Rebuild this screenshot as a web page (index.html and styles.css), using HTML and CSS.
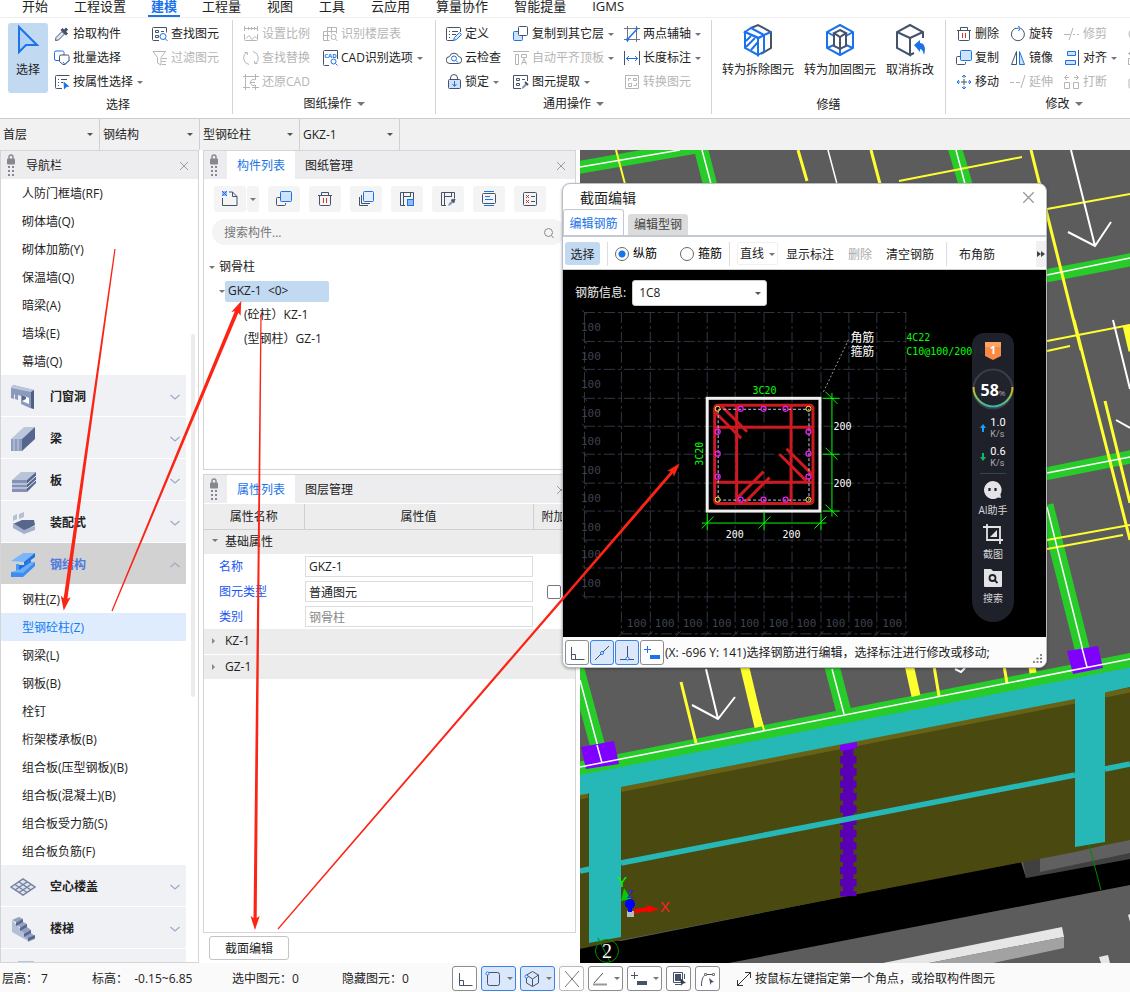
FILE: index.html
```html
<!DOCTYPE html>
<html lang="zh-CN">
<head>
<meta charset="utf-8">
<title>截面编辑</title>
<link rel="stylesheet" href="styles.css">
</head>
<body>
<svg class="defs" width="0" height="0" aria-hidden="true">
  <symbol id="i-pick" viewBox="0 0 16 16"><path d="M1.500 14.500l.5-3 6-6 2.500 2.500-6 6z" fill="#dbe7f8" stroke="#4b5a75"/><path d="M7.500 3l5.500 5.500M10 6l3-3.500" fill="none" stroke="#45526b" stroke-width="3"/></symbol>
  <symbol id="i-batch" viewBox="0 0 16 16"><path class="b" d="M5 10.500H2a1.500 1.500 0 0 1-1.500-1.500V2.500A1.500 1.500 0 0 1 2 1h6.500A1.500 1.500 0 0 1 10 2.500V5"/><path class="d" d="M9 14.500l-3.500-3V6.500a1.500 1.500 0 0 1 1.500-1.500h6.500A1.500 1.500 0 0 1 15 6.500v4l-4 4z"/><path class="b" d="M9 12l2 2.500 4.500-4.500"/></symbol>
  <symbol id="i-prop" viewBox="0 0 16 16"><path class="d" d="M8 14.500H2.500a1 1 0 0 1-1-1V2.500a1 1 0 0 1 1-1h13M4 5.500h1M7 5.500h6M4 8.500h1M7 8.500h2M4 11.500h1"/><path d="M9.500 7.500l6 5-3 .5-2.500 2.500z" fill="#1a73e8"/></symbol>
  <symbol id="i-find" viewBox="0 0 16 16"><path class="d" d="M7 14.500H1.500a1 1 0 0 1-1-1V2.500a1 1 0 0 1 1-1h13v5M3.500 4.500h3v2h-3zM3.500 9.500h3v2h-3zM9 5.500h3"/><circle class="b" cx="11" cy="10.500" r="3"/><path class="b" d="M13 12.500l2.500 2.500"/></symbol>
  <symbol id="i-filter" viewBox="0 0 16 16"><path class="g" d="M1 1.500h12.500L9 7.500V9M1 1.500L5.500 7.500V13L9 15V9M10 8.500h5M10 11.500h4M10 14.500h4"/></symbol>
  <symbol id="i-scale" viewBox="0 0 16 16"><path class="g" d="M1 2.500h14M1.500 0v5M14.500 0v5M5.500 1v3M8.500 1v3M11.500 1v3M1.500 8v5.500a1 1 0 0 0 1 1h11a1 1 0 0 0 1-1V8M3 12.500l3-3 3 4 3-3 2 2"/></symbol>
  <symbol id="i-replace" viewBox="0 0 16 16"><path class="g" d="M6 14.500a6.500 6.500 0 0 1-2-12H1.500M4.500 2.500V5M10 1.500a6.500 6.500 0 0 1 2 12h2.500M11.500 13.500V11"/></symbol>
  <symbol id="i-restore" viewBox="0 0 16 16"><path class="g" d="M0 2.500h16M2.500 0v16M12.500 0v6M0 13.500h7M9 13.500h7M12.500 11v5M12 6a3 3 0 1 0 0 5M7 8.500h5"/></symbol>
  <symbol id="i-floor" viewBox="0 0 16 16"><path class="g" d="M5.500 1v4.500h-4v9h6M5.500 1.500h9v6M9.500 1.500v6M5.500 5.500h9M1.500 9.500h6M5.500 5.500v9"/><circle class="g" cx="11.500" cy="11" r="2.500"/><path class="g" d="M13.500 13l2 2"/></symbol>
  <symbol id="i-cad" viewBox="0 0 16 16"><path class="d" d="M7 15.500H2.500a1 1 0 0 1-1-1V1.500a1 1 0 0 1 1-1h13V9"/><text x="8.500" y="8" text-anchor="middle" class="cad-txt">CAD</text><circle class="b" cx="11.500" cy="11.500" r="2.500"/><path class="b" d="M13.500 13.500l2 2"/></symbol>
  <symbol id="i-define" viewBox="0 0 16 16"><path class="d" d="M8 14.500H1.500a1 1 0 0 1-1-1V2.500a1 1 0 0 1 1-1h12a1 1 0 0 1 1 1V6M3 5.500h1M6 5.500h6M3 8.500h1M6 8.500h4M3 11.500h1"/><path d="M7.500 14.500l1-3 5-5 2 2-5 5z" fill="#dcebfd" stroke="#1a73e8"/></symbol>
  <symbol id="i-cloud" viewBox="0 0 16 16"><path class="d" d="M4 13.500a3.500 3.500 0 0 1-.5-7 4.700 4.700 0 0 1 9 0 3.500 3.500 0 0 1-.5 7z"/><circle class="b" cx="8" cy="8.500" r="2.500"/><path class="b" d="M10 10.500l2 2"/></symbol>
  <symbol id="i-lock" viewBox="0 0 16 16"><path class="d" d="M4.500 5.500V4a3.500 3.500 0 0 1 7 0v1.500"/><rect x="2.500" y="5.500" width="12" height="9" rx="1" fill="#cfe0f8" stroke="#45526b"/><path d="M8.500 7v5M6.500 10l2 2.500 2-2.500" stroke="#1a73e8" fill="none"/></symbol>
  <symbol id="i-copyfl" viewBox="0 0 16 16"><rect x=".5" y="5.500" width="9" height="9" rx="1" fill="#cfe2fb" stroke="#1a73e8"/><rect x="5.500" y=".5" width="9" height="9" rx="1" fill="#fff" stroke="#45526b"/></symbol>
  <symbol id="i-align" viewBox="0 0 16 16"><path class="g" d="M0 1.500h16M2.500 4.500h3v10h-3zM8.500 4.500h5v3h-5zM8.500 14.500l2.500-6 2.500 6M9.500 12.500h4"/></symbol>
  <symbol id="i-extract" viewBox="0 0 16 16"><path class="d" d="M8 14.500H.5v-13h14V7M3.500 4.500h3v2h-3zM3.500 9.500h3v2h-3zM9 5.500h3"/><path d="M8.500 15l1-2.500 3-3 1.500 1.500-3 3z" fill="#8495b5"/><path d="M12 8l3 3" stroke="#45526b" stroke-width="2"/></symbol>
  <symbol id="i-axis" viewBox="0 0 16 16"><path d="M0 2.500h16M0 13.500h16M3.500 0v16M12.500 0v16" fill="none" stroke="#6b7588"/><path d="M3 14L14 2" stroke="#1a73e8" stroke-width="1.500"/><circle cx="3.500" cy="13.500" r="1.500" fill="#1a73e8"/></symbol>
  <symbol id="i-length" viewBox="0 0 16 16"><path class="d" d="M.5 1v14M15.500 1v14"/><path class="b" d="M2 8.500h12M5 6L2.500 8.500 5 11M11 6l2.500 2.500L11 11"/></symbol>
  <symbol id="i-convert" viewBox="0 0 16 16"><path class="g" d="M1.500 1.500h13v13h-13zM4.500 9.500h3v3h-3zM9.500 4.500h3v2h-3zM7 4.500H4.500V7M9.500 11.500h3V9"/></symbol>
  <symbol id="i-trash" viewBox="0 0 16 16"><path class="d" d="M1 4.500h14M4.500 4V1.500h7V4M2.500 4.500v9a1 1 0 0 0 1 1h9a1 1 0 0 0 1-1v-9"/><path d="M6.500 7v5M9.500 7v5" stroke="#d9342b"/></symbol>
  <symbol id="i-copy" viewBox="0 0 16 16"><path class="d" d="M4 6.500H1.500a1 1 0 0 0-1 1v6a1 1 0 0 0 1 1h7a1 1 0 0 0 1-1V12"/><rect x="4.500" y=".5" width="11" height="10" rx="1" fill="#cfe2fb" stroke="#1a73e8"/></symbol>
  <symbol id="i-move" viewBox="0 0 16 16"><path class="d" d="M8 5v6M5 8h6"/><path class="b" d="M8 1v3M8 12v3M1 8h3M12 8h3M6 3l2-2 2 2M6 13l2 2 2-2M3 6L1 8l2 2M13 6l2 2-2 2"/></symbol>
  <symbol id="i-rotate" viewBox="0 0 16 16"><path class="d" d="M11 2.500a6.500 6.500 0 1 1-5-.5"/><path class="b" d="M5.500 2.500L10 2M8 0l2.500 2L8.500 5"/></symbol>
  <symbol id="i-mirror" viewBox="0 0 16 16"><path class="d" d="M6.500 1.500v13h-5z"/><path d="M9.500 1.500v13h5z" fill="#cfe2fb" stroke="#1a73e8"/></symbol>
  <symbol id="i-extend" viewBox="0 0 16 16"><path class="g" d="M0 8.500h4M6 8.500h4M11 14l4-13"/></symbol>
  <symbol id="i-trim" viewBox="0 0 16 16"><path class="g" d="M0 8.500h6M9 8.500h2M13 8.500h2M5 14l4-12"/></symbol>
  <symbol id="i-lineup" viewBox="0 0 16 16"><path d="M3.500 1.500h8v4h-8zM1.500 10.500h10v4h-10z" fill="#cfe2fb" stroke="#1a73e8"/><path class="d" d="M14.500 0v16"/></symbol>
  <symbol id="i-break" viewBox="0 0 16 16"><path class="g" d="M.5 8.500h5v6h-5zM9.500 8.500h5v6h-5zM1 3.500h4M3 1L.5 3.500 3 6M14 3.500h-4M12 1l2.500 2.500L12 6"/></symbol>
  <symbol id="i-new" viewBox="0 0 16 16"><path class="d" d="M10.500 1v4.500H15L10.500 1H7M15 5.500v9H.5V7"/><path d="M0 0h5v5H0z" fill="#8fbcf5"/><path class="b" d="M0 0l5 5M5 0L0 5"/></symbol>
  <symbol id="i-stack" viewBox="0 0 16 16"><rect x="5.500" y=".5" width="10" height="10" rx="1" fill="#e3effd" stroke="#1a73e8"/><path class="d" d="M3.500 4v8.500H12M1.500 6v8.500H10"/></symbol>
  <symbol id="i-save" viewBox="0 0 16 16"><path class="d" d="M6 14.500H1.500V1.500h13V8M4.500 1.500v13M11.500 1.500V6M4.500 5.500h7"/><rect x="8.500" y="8.500" width="6" height="6" fill="#8fbcf5" stroke="#1a73e8"/></symbol>
  <symbol id="i-savep" viewBox="0 0 16 16"><path class="d" d="M6 14.500H1.500V1.500h13V7M4.500 1.500v13M11.500 1.500V6M4.500 5.500h7"/><path d="M8 15l1-2.500 3-3 1.500 1.500-3 3z" fill="#8495b5"/><path d="M11.500 8.500l3 3M13 10l2-2" stroke="#45526b" stroke-width="1.800"/></symbol>
  <symbol id="i-text" viewBox="0 0 16 16"><rect class="d" x="1.500" y="2.500" width="13" height="10" rx="1"/><path class="b" d="M3 .5h10M3 14.500h10M4 5.500h5M4 8.500h8"/></symbol>
  <symbol id="i-check" viewBox="0 0 16 16"><rect class="d" x="1.500" y="1.500" width="13" height="13" rx="1"/><path d="M4 4l3 3M7 4L4 7M4 9l3 3M7 9l-3 3" stroke="#d9342b"/><path class="d" d="M9 5.500h4M9 10.500h4"/></symbol>
  <symbol id="i-x" viewBox="0 0 10 10"><path d="M1 1l8 8M9 1L1 9" stroke="#999"/></symbol>
  <symbol id="i-grip" viewBox="0 0 10 24"><path d="M3 6V4a2 2 0 0 1 4 0v2" fill="none" stroke="#85898f" stroke-width="1.400"/><rect x="1" y="5.500" width="8" height="6" rx="1" fill="#85898f"/><path d="M2 14h2M6 14h2M2 18h2M6 18h2M2 22h2M6 22h2" stroke="#85898f" stroke-width="2"/></symbol>
  <symbol id="i-down" viewBox="0 0 10 6"><path d="M.5 1L5 5 9.500 1" fill="none" stroke="#9aabc6" stroke-width="1.200"/></symbol>
  <symbol id="s-ortho" viewBox="0 0 16 16"><path class="d" d="M2.500 2v12.500h13M2.500 9.500h4v5"/></symbol>
</svg>

<nav class="tabs">
  <a href="#">开始</a><a href="#">工程设置</a><a href="#" class="on">建模</a><a href="#">工程量</a><a href="#">视图</a><a href="#">工具</a><a href="#">云应用</a><a href="#">算量协作</a><a href="#">智能提量</a><a href="#">IGMS</a>
</nav>

<header class="ribbon">
  <section class="group g1">
    <div class="cols">
      <button class="big on"><svg viewBox="0 0 28 34" class="bi"><path d="M5 4l18 18H12l-7 7z" fill="#b3d0f6" stroke="#1a73e8" stroke-width="2"/></svg><span>选择</span></button>
      <div class="col">
        <button><svg><use href="#i-pick"/></svg>拾取构件</button>
        <button><svg><use href="#i-batch"/></svg>批量选择</button>
        <button><svg><use href="#i-prop"/></svg>按属性选择<i class="dd"></i></button>
      </div>
      <div class="col">
        <button><svg><use href="#i-find"/></svg>查找图元</button>
        <button disabled><svg><use href="#i-filter"/></svg>过滤图元</button>
      </div>
    </div>
    <h2>选择</h2>
  </section>
  <section class="group g2">
    <div class="cols">
      <div class="col">
        <button disabled><svg><use href="#i-scale"/></svg>设置比例</button>
        <button disabled><svg><use href="#i-replace"/></svg>查找替换</button>
        <button disabled><svg><use href="#i-restore"/></svg>还原CAD</button>
      </div>
      <div class="col">
        <button disabled><svg><use href="#i-floor"/></svg>识别楼层表</button>
        <button><svg><use href="#i-cad"/></svg>CAD识别选项<i class="dd"></i></button>
      </div>
    </div>
    <h2>图纸操作<i class="dd lg"></i></h2>
  </section>
  <section class="group g3">
    <div class="cols">
      <div class="col">
        <button><svg><use href="#i-define"/></svg>定义</button>
        <button><svg><use href="#i-cloud"/></svg>云检查</button>
        <button><svg><use href="#i-lock"/></svg>锁定<i class="dd"></i></button>
      </div>
      <div class="col">
        <button><svg><use href="#i-copyfl"/></svg>复制到其它层<i class="dd"></i></button>
        <button disabled><svg><use href="#i-align"/></svg>自动平齐顶板<i class="dd"></i></button>
        <button><svg><use href="#i-extract"/></svg>图元提取<i class="dd"></i></button>
      </div>
      <div class="col">
        <button><svg><use href="#i-axis"/></svg>两点辅轴<i class="dd"></i></button>
        <button><svg><use href="#i-length"/></svg>长度标注<i class="dd"></i></button>
        <button disabled><svg><use href="#i-convert"/></svg>转换图元</button>
      </div>
    </div>
    <h2>通用操作<i class="dd lg"></i></h2>
  </section>
  <section class="group g4">
    <div class="cols">
      <button class="big"><svg viewBox="0 0 32 32" class="bi"><path d="M9 4l7-3 13 7v16l-10 6" fill="none" stroke="#45526b" stroke-width="2"/><path d="M3 8l6-4 13 7-5 3zM3 8v16l13 7V14zM16 14l6-3v17M16 14v17l5-3M29 8l-7 3" fill="none" stroke="#1a73e8" stroke-width="2"/><path d="M4 17l5-5M4 23l9-9M9 26l7-8" stroke="#1a73e8" stroke-width="2"/></svg><span>转为拆除图元</span></button>
      <button class="big"><svg viewBox="0 0 32 32" class="bi"><path d="M16 1l13 7v16l-13 7-13-7V8zM3 8l7 4M29 8l-7 4M3 24l7-3M29 24l-7-3M16 15v16" fill="none" stroke="#1a73e8" stroke-width="2"/><path d="M16 6l6 3-6 4-6-4zM10 9v13l6 3 6-3V9M16 13v12" fill="none" stroke="#45526b" stroke-width="2"/></svg><span>转为加固图元</span></button>
      <button class="big"><svg viewBox="0 0 32 32" class="bi"><path d="M29 14V8L16 1 3 8v16l13 7V14L3 8M16 14l13-6M16 31l4-2" fill="none" stroke="#45526b" stroke-width="2"/><path d="M20 21l6-5v3c5 0 6 6 4 12-1-4-2-6-4-6v3z" fill="#1a73e8"/></svg><span>取消拆改</span></button>
    </div>
    <h2>修缮</h2>
  </section>
  <section class="group g5">
    <div class="cols">
      <div class="col">
        <button><svg><use href="#i-trash"/></svg>删除</button>
        <button><svg><use href="#i-copy"/></svg>复制</button>
        <button><svg><use href="#i-move"/></svg>移动</button>
      </div>
      <div class="col">
        <button><svg><use href="#i-rotate"/></svg>旋转</button>
        <button><svg><use href="#i-mirror"/></svg>镜像</button>
        <button disabled><svg><use href="#i-extend"/></svg>延伸</button>
      </div>
      <div class="col">
        <button disabled><svg><use href="#i-trim"/></svg>修剪</button>
        <button><svg><use href="#i-lineup"/></svg>对齐<i class="dd"></i></button>
        <button disabled><svg><use href="#i-break"/></svg>打断</button>
      </div>
      <div class="col">
        <button disabled aria-label="偏移"><svg viewBox="0 0 16 16"><circle class="g" cx="7" cy="8" r="6"/></svg></button>
        <button disabled aria-label="合并"><svg><use href="#i-break"/></svg></button>
        <button disabled aria-label="分割"><svg viewBox="0 0 16 16"><rect class="g" x="1" y="5" width="10" height="9" rx="1"/></svg></button>
      </div>
    </div>
    <h2>修改<i class="dd lg"></i></h2>
  </section>
</header>

<div class="filters">
  <label><select aria-label="楼层"><option>首层</option></select></label>
  <label><select aria-label="构件大类"><option>钢结构</option></select></label>
  <label><select aria-label="构件类型"><option>型钢砼柱</option></select></label>
  <label><select aria-label="构件"><option>GKZ-1</option></select></label>
</div>

<main>
  <aside class="nav">
    <div class="bar"><svg class="grip"><use href="#i-grip"/></svg><h2>导航栏</h2><button class="x" aria-label="关闭"><svg><use href="#i-x"/></svg></button></div>
    <div class="navbody">
      <ul>
        <li><a href="#">人防门框墙(RF)</a></li><li><a href="#">砌体墙(Q)</a></li><li><a href="#">砌体加筋(Y)</a></li><li><a href="#">保温墙(Q)</a></li><li><a href="#">暗梁(A)</a></li><li><a href="#">墙垛(E)</a></li><li><a href="#">幕墙(Q)</a></li>
      </ul>
      <button class="cat"><svg viewBox="0 0 26 26"><path d="M1 4l2-3 21 5v19l-4-1-9-4v-8l-3-1v5l-3-1v-4l-1-1v5l-3-1z" fill="#8b99ba"/><path d="M1 4l2-3 21 5-3 2z" fill="#bcc6dc"/><path d="M12 11l7 3v6l-7-3z" fill="#fff"/><path d="M12 11v6l4-2v-2z" fill="#57678d"/><path d="M21 8l3-2v19l-3-1z" fill="#4f5f86"/></svg><span>门窗洞</span><svg class="chev"><use href="#i-down"/></svg></button>
      <button class="cat"><svg viewBox="0 0 26 26"><path d="M1 13L14 1h11L12 13z" fill="#bcc6dc"/><path d="M12 13L25 1v12L12 25z" fill="#56668c"/><path d="M1 13h11v12H1z" fill="#8e9cbe"/><path d="M4 13v12M8 13v12" stroke="#c6cfe2"/></svg><span>梁</span><svg class="chev"><use href="#i-down"/></svg></button>
      <button class="cat"><svg viewBox="0 0 26 26"><path d="M2 12L11 4h15l-9 8z" fill="#b9c3da"/><path d="M2 12h15v12H2z" fill="#8492b5"/><path d="M17 12l9-8v11l-9 9z" fill="#56668c"/><path d="M2 16h15l9-8M2 20h15l9-8" fill="none" stroke="#e9edf5"/></svg><span>板</span><svg class="chev"><use href="#i-down"/></svg></button>
      <button class="cat"><svg viewBox="0 0 26 26"><path d="M3 14l9-4h12l1 5-11 6z" fill="#56668c"/><path d="M3 13v5l11 6v-4zM14 20l11-4v4l-11 4z" fill="#a4b0cc"/><path d="M3 6l4-2v5l-4 2zM9 4l5-2v5l-5 2z" fill="#b5bfd6"/></svg><span>装配式</span><svg class="chev"><use href="#i-down"/></svg></button>
      <button class="cat open"><svg viewBox="0 0 26 26"><path d="M1 9L13 1h12L14 10z" fill="#7bb6fa"/><path d="M14 10l11-9v4L14 13z" fill="#1d6fdc"/><path d="M6 12h3v6l-3 1z" fill="#4c9af8"/><path d="M9 13h5l7-5v3l-12 9z" fill="#1d6fdc"/><path d="M1 20l8-2 12-8h4L13 22z" fill="#6aaefa"/><path d="M1 20l12 1 12-11v4L13 25H1z" fill="#3b8df2"/></svg><span>钢结构</span><svg class="chev up"><use href="#i-down"/></svg></button>
      <ul>
        <li><a href="#">钢柱(Z)</a></li><li class="on"><a href="#">型钢砼柱(Z)</a></li><li><a href="#">钢梁(L)</a></li><li><a href="#">钢板(B)</a></li><li><a href="#">栓钉</a></li><li><a href="#">桁架楼承板(B)</a></li><li><a href="#">组合板(压型钢板)(B)</a></li><li><a href="#">组合板(混凝土)(B)</a></li><li><a href="#">组合板受力筋(S)</a></li><li><a href="#">组合板负筋(F)</a></li>
      </ul>
      <button class="cat"><svg viewBox="0 0 26 26"><path d="M1 13l12-8 12 8-12 8z" fill="#dfe4ef" stroke="#74839f" stroke-width="1.500"/><path d="M5 10.500l12 8M9 8l12 8M17 8L5 16M21 10.500L9 18.500" stroke="#74839f" stroke-width="1.500"/></svg><span>空心楼盖</span><svg class="chev"><use href="#i-down"/></svg></button>
      <button class="cat"><svg viewBox="0 0 26 26"><path d="M2 4v12l16 9v-4z" fill="#b4bed6"/><path d="M2 4l7-3 4 2v3l4 2v3l4 3v3l4 3v3l-7 3v-3l-4-3v-3l-4-3v-3l-4-2V6z" fill="#93a0c0"/><path d="M6 7l7-4v3l-7 4zM10 12l7-4v3l-7 4zM14 18l7-4v3l-7 4zM18 22l7-3v3l-7 3z" fill="#56668c"/></svg><span>楼梯</span><svg class="chev"><use href="#i-down"/></svg></button>
      <button class="cat" aria-label="更多构件"><svg viewBox="0 0 26 26"><path d="M8 3h16v20H8z" fill="#b9c3da"/></svg></button>
      <i class="thumb"></i>
    </div>
  </aside>

  <div class="mid">
    <section class="panel">
      <div class="bar"><svg class="grip"><use href="#i-grip"/></svg><button class="tab on">构件列表</button><button class="tab">图纸管理</button><button class="x" aria-label="关闭"><svg><use href="#i-x"/></svg></button></div>
      <div class="tools">
        <div class="split"><button aria-label="新建"><svg><use href="#i-new"/></svg></button><button class="more" aria-label="更多"><i class="dd"></i></button></div>
        <button aria-label="复制"><svg><use href="#i-copy"/></svg></button>
        <button aria-label="删除"><svg><use href="#i-trash"/></svg></button>
        <button aria-label="层间复制"><svg><use href="#i-stack"/></svg></button>
        <button aria-label="存档"><svg><use href="#i-save"/></svg></button>
        <button aria-label="提取"><svg><use href="#i-savep"/></svg></button>
        <button aria-label="过滤"><svg><use href="#i-text"/></svg></button>
        <button aria-label="未使用"><svg><use href="#i-check"/></svg></button>
      </div>
      <div class="search"><input type="text" placeholder="搜索构件..." aria-label="搜索构件"><svg viewBox="0 0 12 12"><circle cx="5.500" cy="5.500" r="4" fill="none" stroke="#8a8a8a"/><path d="M8.500 8.500l2 2.500" stroke="#8a8a8a"/></svg></div>
      <div class="tree">
        <div class="l1"><i class="dd"></i><span>钢骨柱</span></div>
        <div class="l2"><i class="dd"></i><span class="sel">GKZ-1&nbsp; &lt;0&gt;</span></div>
        <div class="l3"><span>(砼柱）KZ-1</span></div>
        <div class="l3"><span>(型钢柱）GZ-1</span></div>
      </div>
    </section>
    <section class="panel props">
      <div class="bar"><svg class="grip"><use href="#i-grip"/></svg><button class="tab on">属性列表</button><button class="tab">图层管理</button><button class="x" aria-label="关闭"><svg><use href="#i-x"/></svg></button></div>
      <table>
        <colgroup><col class="c1"><col class="c2"><col></colgroup>
        <thead><tr><th>属性名称</th><th>属性值</th><th>附加</th></tr></thead>
        <tbody>
          <tr class="sec"><td colspan="3"><i class="dd"></i>基础属性</td></tr>
          <tr><td><label for="p1">名称</label></td><td><input id="p1" type="text" value="GKZ-1"></td><td></td></tr>
          <tr><td><label for="p2">图元类型</label></td><td><input id="p2" type="text" value="普通图元"></td><td><input type="checkbox" aria-label="附加图元类型"></td></tr>
          <tr><td><label for="p3">类别</label></td><td><input id="p3" type="text" value="钢骨柱" disabled></td><td></td></tr>
          <tr class="sec line"><td colspan="3"><i class="dd rt"></i>KZ-1</td></tr>
          <tr class="sec"><td colspan="3"><i class="dd rt"></i>GZ-1</td></tr>
        </tbody>
      </table>
    </section>
    <button class="editbtn">截面编辑</button>
  </div>

  <div class="view">
    <svg viewBox="580 150 550 813" preserveAspectRatio="xMinYMin slice">
      <rect x="580" y="150" width="1200" height="1000" fill="#5c5c5c"/>
      <g stroke="#28cc28" stroke-width="13" fill="none">
        <path d="M570 169L702 146"/><path d="M700 145L714 200M954 145L970 200" stroke-width="14"/>
        <path d="M1040 277L1140 258M1040 475L1140 455"/>
        <path d="M1046 505L1087 668M573 655L602 762M829 655L845 716" stroke-width="15"/>
      </g>
      <path d="M580 761.500L1130 653v15L580 776z" fill="#28cc28"/>
      <g stroke="#ffff30" fill="none" stroke-width="3">
        <path d="M798 150l9 31M871 150l9 34M1031 150l50 200M1074 320l56 220M1105 401l25 102M681 682l15 61M933 660l6 36M1003 660l4 23"/>
        <path d="M616 150l9 34M899 181l123-24M1047 209l83-15M1047 341l83-16M1047 351l23-5M1047 540l83-15M1047 549l76-14M755 700l9 30" stroke-width="2"/>
        <path d="M743 660l16 67M908 660l8 36" stroke-width="9"/><path d="M1126 325l6 26" stroke-width="7"/>
        <path d="M1031 660l2 13" stroke-width="7"/>
      </g>
      <g stroke="#fff" stroke-width="1.500" fill="none">
        <path d="M580 167l100-17M702 150l9 34M956 150l9 34M828 150l9 34M1047 275l83-17M1047 473l83-16M1047 507l40 160M580 680l22 82M832 669l12 45"/>
        <path d="M1071 150l24 96M1068 232l27 14 16-24M1113 320l17 69M1116 420l14 8M706 669l12 50M692 705l26 14 17-22M955 669l6 3 4-4" stroke-width="2"/>
      </g>
      <path d="M581 747l33-6 5 23-33 5zM1067 651l31-5 5 22-30 6z" fill="#7f00ff"/>
      <path d="M580 767L1130 659M597 745l5 18M1082 648l5 19" stroke="#fff" stroke-width="1.500"/>
      <path d="M1021 850l5 28 104-19v-30z" fill="#404040"/><path d="M1040 850v22l90-19v-30z" fill="#606060"/>
      <path d="M580 936v27h149l401-78v-26l-104 19-5-16-100 19-300 60z" fill="#000"/>
      <path d="M580 780L1130 672v168l-25 5-30 7-454 88-41 9z" fill="#4a490f"/>
      <path d="M580 797l8-2M621 789.500L1075 701M1105 695l25-5" stroke="#676215" stroke-width="5"/>
      <path d="M843 748h10.500v147l-10.500 2z" fill="#5a00b4"/><path d="M848.300 756v140" stroke="#5a00b4" stroke-width="16.500" stroke-dasharray="7.500 4.800"/>
      <path d="M840 745l17-3v6l-17 3z" fill="#7f00ff"/>
      <path d="M621 863l454-88M580 871l10-2M1105 769l25-5" stroke="#26b7b7" stroke-width="5.500"/>
      <path d="M580 775L1130 667.500V687l-25 5.500V842l-30 5V699L621 787v150l-32 6V793.500l-9 1.500z" fill="#26b7b7"/>
      <path d="M1089 845l12 45M598 938l12 24" stroke="#008a00"/>
      <path d="M883 963l179-36 2 10-135 26z" fill="#e6e6e6"/><path d="M929 963l135-26v11l-71 15z" fill="#a2a2a2"/>
      <path d="M1099 957l9-2 2 8h-9zM1128 915l2-1v8z" fill="#e6e6e6"/>
      <circle cx="607" cy="951" r="11.500" fill="none" stroke="#008a00"/><text x="607" y="958" class="num2">2</text>
      <path d="M627 911h7v6h-7z" fill="#bbb"/><path d="M634 911.500l14-2.500" stroke="#f00" stroke-width="4"/><path d="M647 905l12 4-11 4z" fill="#f00"/>
      <path d="M624 888l7 11-10 2z" fill="#0c0"/><circle cx="630" cy="904" r="5" fill="#00f"/><path d="M630 906v6" stroke="#00f" stroke-width="4"/>
      <text x="622" y="887" class="axis" fill="#0f0">Y</text><text x="665" y="912" class="axis" fill="#f22">X</text><text x="630" y="898" class="axis sm" fill="#22f">Z</text>
    </svg>
  </div>

  <section class="dialog" role="dialog" aria-label="截面编辑">
    <div class="dtitle"><h1>截面编辑</h1><button aria-label="关闭"><svg><use href="#i-x"/></svg></button></div>
    <div class="dtabs"><button class="on">编辑钢筋</button><button>编辑型钢</button></div>
    <div class="dtools">
      <button class="on">选择</button><hr>
      <label class="r1"><input type="radio" name="bar" checked>纵筋</label>
      <label class="r2"><input type="radio" name="bar">箍筋</label><hr>
      <button class="line">直线<i class="dd"></i></button>
      <button>显示标注</button><button disabled>删除</button><button>清空钢筋</button><hr class="wide">
      <button class="corner">布角筋</button><button class="next" aria-label="更多"><svg viewBox="0 0 8 6"><path d="M0 0l4 3-4 3zM4 0l4 3-4 3z" fill="#444"/></svg></button>
    </div>
    <div class="draw">
      <label class="info"><span>钢筋信息:</span><span class="selwrap"><select><option>1C8</option></select></span></label>
      <svg class="sec-svg" viewBox="563 309 484 329">
        <g stroke="#303643" fill="none" stroke-dasharray="11 3 3 3">
          <path d="M584.500 312V598M621.500 312V634M650.500 312V634M678.500 312V634M707.500 312V634M735.500 312V634M764.500 312V634M792.500 312V634M821.500 312V634M849.500 312V634M877.500 312V634M906.500 312V634"/>
          <path d="M584 312.500H907M584 341.500H907M584 369.500H907M584 398.500H907M584 426.500H907M584 454.500H907M584 483.500H907M584 511.500H907M584 540.500H907M584 568.500H907M584 597.500H907M621 634.500H907"/>
        </g>
        <path d="M582 310l5 5M582 339l5 5M582 367l5 5M582 396l5 5M582 424l5 5M582 452l5 5M582 481l5 5M582 509l5 5M582 538l5 5M582 566l5 5M582 595l5 5M619 637l5-5M648 637l5-5M676 637l5-5M705 637l5-5M733 637l5-5M762 637l5-5M790 637l5-5M819 637l5-5M847 637l5-5M875 637l5-5M904 637l5-5" stroke="#303643"/>
        <g class="dim">
          <text x="581" y="331">100</text><text x="581" y="360">100</text><text x="581" y="388">100</text><text x="581" y="417">100</text><text x="581" y="445">100</text><text x="581" y="474">100</text><text x="581" y="502">100</text><text x="581" y="531">100</text><text x="581" y="559">100</text><text x="581" y="588">100</text>
          <text x="627" y="628">100</text><text x="655" y="628">100</text><text x="683" y="628">100</text><text x="712" y="628">100</text><text x="740" y="628">100</text><text x="769" y="628">100</text><text x="797" y="628">100</text><text x="826" y="628">100</text><text x="854" y="628">100</text><text x="883" y="628">100</text>
        </g>
        <rect x="707.500" y="398.500" width="113" height="113" fill="none" stroke="#f0f0f0" stroke-width="3"/>
        <g stroke="#cc1a20" stroke-width="3" fill="none">
          <rect x="715" y="405.500" width="98.500" height="98.500" rx="3"/><path d="M737 406v98M791.500 406v98M715 427.500h98M715 482.500h98"/>
          <path d="M714.500 411.500l27 27M721.500 406l26 26M787 449l26 26M780 454.500l27 27M764 472l-26 26M770 478l-25 25"/>
        </g>
        <rect x="718.500" y="409.500" width="91" height="91" fill="none" stroke="#b5cbe8" stroke-dasharray="3 2"/>
        <g fill="none" stroke="#ffe040"><circle cx="718" cy="409" r="2.500"/><circle cx="809" cy="409" r="2.500"/><circle cx="718" cy="500" r="2.500"/><circle cx="809" cy="500" r="2.500"/></g>
        <g fill="none" stroke="#f01cf0" stroke-width="1.300"><circle cx="741" cy="409" r="2.500"/><circle cx="764" cy="409" r="2.500"/><circle cx="786" cy="409" r="2.500"/><circle cx="741" cy="500" r="2.500"/><circle cx="764" cy="500" r="2.500"/><circle cx="786" cy="500" r="2.500"/><circle cx="718" cy="432" r="2.500"/><circle cx="718" cy="454" r="2.500"/><circle cx="718" cy="477" r="2.500"/><circle cx="809" cy="432" r="2.500"/><circle cx="809" cy="454" r="2.500"/><circle cx="809" cy="477" r="2.500"/></g>
        <path d="M832.500 393v124M823 398.500h17M823 454.500h17M823 511.500h17M826 392l12 12M826 448l12 12M826 505l12 12M702 523.500h125M707.500 514v17M764.500 512v19M821.500 514v17M702 529l12-12M759 529l12-12M815 529l12-12" stroke="#0f0" fill="none"/>
        <path d="M824 392l25-52" stroke="#999" stroke-dasharray="2 2"/>
        <g class="lbl" fill="#0f0"><text x="753" y="394">3C20</text><text transform="translate(703 466) rotate(-90)">3C20</text><text x="907" y="341">4C22</text><text x="907" y="355">C10@100/200(4)</text></g>
        <g class="lbl" fill="#fff"><text x="834" y="430">200</text><text x="834" y="487">200</text><text x="726" y="538">200</text><text x="783" y="538">200</text></g>
        <g class="cn" fill="#fff"><text x="851" y="342">角筋</text><text x="851" y="356">箍筋</text></g>
      </svg>
    </div>
    <div class="dstatus">
      <button aria-label="正交"><svg><use href="#s-ortho"/></svg></button>
      <button class="on" aria-label="斜线"><svg viewBox="0 0 16 16"><path class="d" d="M1 15L15 1"/><circle cx="8" cy="8" r="1.500" fill="#fff" stroke="#1a73e8"/></svg></button>
      <button class="on" aria-label="垂足"><svg viewBox="0 0 16 16"><path class="d" d="M8.500 1v13M1 14.500h14"/><circle cx="8.500" cy="13.500" r="1.500" fill="#fff" stroke="#1a73e8"/></svg></button>
      <button aria-label="动态输入"><svg viewBox="0 0 16 16"><path class="b" d="M0 4.500h7M3.500 1v7"/><path d="M6 10h10v4H6z" fill="#1a73e8"/></svg></button>
      <p>(X: -696 Y: 141)选择钢筋进行编辑，选择标注进行修改或移动;</p>
      <svg class="resize" viewBox="0 0 9 9"><path d="M0 8h2M3.500 8h2M7 8h2M3.500 4.500h2M7 4.500h2M7 1h2" stroke="#666" stroke-width="1.500"/></svg>
    </div>
  </section>

  <aside class="widget">
    <svg class="badge" viewBox="0 0 16 18"><path d="M0 0h16v14l-8 4-8-4z" fill="#f98a45"/><path d="M0 0h16v5H0z" fill="#fba565"/><text x="8" y="12" text-anchor="middle" class="one">1</text></svg>
    <div class="gauge"><svg viewBox="0 0 42 42"><defs><linearGradient id="gg" x1="0" y1="0" x2="0" y2="1"><stop offset="0" stop-color="#e8b420"/><stop offset=".5" stop-color="#8bc34a"/><stop offset="1" stop-color="#35b5a5"/></linearGradient></defs><circle cx="21" cy="21" r="19.500" fill="#20222c" stroke="#3a3d4a" stroke-width="2"/><path d="M1.500 19a19.500 19.500 0 1 0 39 0" fill="none" stroke="url(#gg)" stroke-width="2"/></svg><b>58<small>%</small></b></div>
    <div class="rate"><svg viewBox="0 0 6 8"><path d="M3 0l3 4H4v4H2V4H0z" fill="#1ea0f5"/></svg><p><span>1.0</span><small>K/s</small></p></div>
    <div class="rate"><svg viewBox="0 0 6 8"><path d="M3 8L0 4h2V0h2v4h2z" fill="#12b866"/></svg><p><span>0.6</span><small>K/s</small></p></div>
    <hr>
    <button><svg viewBox="0 0 20 20"><path d="M10 1a9 9 0 1 0 5 16.500l3 .5-.6-3.500A9 9 0 0 0 10 1z" fill="#e4e4e6"/><path d="M6.500 8v3M12.500 8v3" stroke="#20222c" stroke-width="2.200"/></svg>AI助手</button>
    <button><svg viewBox="0 0 20 20"><path d="M4 0v16h16M0 3h17v17" fill="none" stroke="#e4e4e6" stroke-width="1.800"/><path d="M14 6v7H7z" fill="#e4e4e6"/></svg>截图</button>
    <button><svg viewBox="0 0 20 20"><path d="M1 1h7l2 2h9v15a1 1 0 0 1-1 1H2a1 1 0 0 1-1-1z" fill="#e4e4e6"/><circle cx="9.500" cy="10" r="3" fill="none" stroke="#20222c" stroke-width="1.800"/><path d="M11.500 12l3 3" stroke="#20222c" stroke-width="1.800"/></svg>搜索</button>
  </aside>
</main>

<footer>
  <p class="f1">层高： 7</p><p class="f2">标高：&nbsp; -0.15~6.85</p><p class="f3">选中图元：0</p><p class="f4">隐藏图元：0</p>
  <div class="fbtns">
    <button aria-label="正交"><svg><use href="#s-ortho"/></svg></button>
    <button class="w on" aria-label="矩形"><svg viewBox="0 0 16 16"><rect class="d" x="2.500" y="1.500" width="12" height="13" rx="2"/><circle cx="2.500" cy="2.500" r="1.500" fill="#fff" stroke="#1a73e8"/></svg><i class="dd"></i></button>
    <button class="w on" aria-label="三维"><svg viewBox="0 0 16 16"><path class="d" d="M8.500.5l6 3.500v8l-6 3.500-6-3.500V4zM2.500 4l6 4 6-4M8.500 8v7"/><circle cx="2.500" cy="5.500" r="1.500" fill="#fff" stroke="#1a73e8"/></svg><i class="dd"></i></button>
    <button class="dim-btn" aria-label="交点"><svg viewBox="0 0 16 16"><path d="M1 0l14 16M15 0L1 16" stroke="#777"/></svg></button>
    <button class="w" aria-label="角度"><svg viewBox="0 0 16 16"><path class="d" d="M11 2L2 12"/><path d="M1 13.500h14" stroke="#999" stroke-width="2"/></svg><i class="dd"></i></button>
    <button class="w" aria-label="输入"><svg viewBox="0 0 16 16"><path class="d" d="M0 4.500h7M3.500 1v7"/><path d="M6 10h10v4H6z" fill="#45526b"/></svg><i class="dd"></i></button>
    <button aria-label="选择"><svg viewBox="0 0 16 16"><path class="d" d="M2.500 1.500h9v10h-9zM13.500 3v5M4 13.500h6"/><path d="M4 3h6v7H4z" fill="#45526b"/><path d="M9 7l6 5-3 .5-1.500 2.500z" fill="#333b4b"/></svg></button>
    <button aria-label="折线"><svg viewBox="0 0 16 16"><path class="d" d="M1.500 15c0-6 1-9 4-11.500h8"/><path d="M9 7l5 4-2.500.5-1 2.500z" fill="#45526b"/><path d="M4.500 2.500h2v2h-2zM12.500 2.500h2v2h-2z" fill="#fff" stroke="#777"/></svg></button>
  </div>
  <p class="hint"><svg viewBox="0 0 16 16"><path d="M1 15L15 1M9 1.500h5.500V7M1.500 9v5.500H7" fill="none" stroke="#333"/></svg>按鼠标左键指定第一个角点，或拾取构件图元</p>
</footer>

<svg class="marks" width="1130" height="992" aria-hidden="true">
  <g fill="#fb2415">
    <path transform="translate(115 249) rotate(98.04)" d="M0-.6L353-1.800l-2-3 14 5-14 5 2-3.200L0 .6z"/>
    <path transform="translate(112 611) rotate(-67.4)" d="M0-.6L324-1.800l-2-3 14 5-14 5 2-3.200L0 .6z"/>
    <path transform="translate(261 314) rotate(90.56)" d="M0-.6L604-1.600l-2-3 14 4.600-14 4.600 2-3L0 .6z"/>
    <path transform="translate(278 929) rotate(-49.22)" d="M0-.6L603-1.500l-2-3 14 4.500-14 4.500 2-3L0 .6z"/>
  </g>
</svg>
</body>
</html>
```
FILE: styles.css
```css
* { box-sizing: border-box; margin: 0; padding: 0; }
body {
  height: 100vh; overflow: hidden; display: flex; flex-direction: column; background: #fff; color: #222;
  font: 12px/16px "Open Sans", "Noto Sans CJK SC", sans-serif; position: relative;
}
button, input, select { font: inherit; color: inherit; border: 0; background: none; }
a { color: inherit; text-decoration: none; }
ul { list-style: none; }
h1, h2 { font: inherit; }
svg { display: block; flex: none; }
.defs { position: absolute; }
.cad-txt { font: bold 6px "Open Sans", sans-serif; fill: #1a73e8; }
.d { fill: none; stroke: #45526b; }
.b { fill: none; stroke: #1a73e8; }
.g { fill: none; stroke: #b5b5b5; }

.dd { display: block; flex: none; border: 3px solid transparent; border-top: 3px solid #777; border-bottom: 0; }
.dd.lg { border-width: 4px 4px 0; }
.dd.rt { border: 3px solid transparent; border-left-color: #888; border-right: 0; }

.tabs { display: flex; gap: 26px; padding-left: 22px; height: 18px; border-bottom: 1px solid #eee; font-size: 13px; line-height: 12px; flex: none; }
.tabs a { height: 17px; white-space: nowrap; }
.tabs .on { color: #1a73e8; font-weight: bold; border-bottom: 2px solid #1a73e8; margin: 0 -4px; padding: 0 3px; }

.ribbon { display: flex; height: 101px; padding: 2px 0 4px; border-bottom: 1px solid #ccc; overflow: hidden; flex: none; }
.group { display: flex; flex-direction: column; padding-top: 2px; border-right: 1px solid #d5d5d5; flex: none; }
.group h2 { height: 22px; display: flex; align-items: center; justify-content: center; gap: 5px; }
.cols { display: grid; height: 72px; }
.col button { display: flex; align-items: center; height: 24px; gap: 3px; white-space: nowrap; }
.col svg { width: 16px; height: 16px; }
.col .dd { margin-left: 1px; }
.ribbon button:disabled { color: #b5b5b5; }
.g1 { width: 233px; padding-left: 8px; }
.g1 .cols { grid-template-columns: 46px 98px 1fr; }
.g2 { width: 203px; padding-left: 10px; }
.g2 .cols { grid-template-columns: 79px 1fr; }
.g3 { width: 276px; padding-left: 10px; }
.g3 .cols { grid-template-columns: 67px 111px 1fr; }
.g4 { width: 234px; padding: 2px 10px 0; }
.g4 .cols { grid-template-columns: 82px 82px 1fr; }
.g5 { width: 266px; padding-left: 10px; border: 0; }
.g5 .cols { grid-template-columns: 54px 54px 64px 1fr; }
.g1 h2 { padding: 2px 4px 0 0; }
.g2 h2, .g3 h2 { padding-right: 10px; }
.g4 h2 { padding-top: 4px; }
.g5 h2 { padding-right: 40px; }
.big { display: flex; flex-direction: column; align-items: center; gap: 5px; margin-top: 1px; white-space: nowrap; justify-self: start; }
.big .bi { width: 32px; height: 34px; }
.big.on { background: #c2d9f2; border-radius: 3px; width: 40px; height: 70px; }
.big.on .bi { width: 28px; }

.filters { display: flex; height: 31px; background: #f1f1f1; flex: none; }
.filters label { width: 100px; border-right: 1px solid #d0d0d0; position: relative; }
.filters select { appearance: none; width: 100%; height: 31px; padding-left: 3px; }
.filters label::after, .selwrap::after { content: ""; position: absolute; right: 6px; top: 14px; border: 3px solid transparent; border-top-color: #555; border-bottom: 0; }

main { flex: 1; min-height: 0; display: flex; position: relative; }
.bar { display: flex; align-items: stretch; height: 29px; background: #ededf0; border-top: 1px solid #d5d5d8; flex: none; }
.grip { width: 10px; height: 24px; margin: 2px 0 0 5px; }
.x { margin-left: auto; padding: 2px 9px 0; }
.x svg { width: 10px; height: 10px; }

.nav { width: 199px; border: 1px solid #d5d5d8; border-top: 0; display: flex; flex-direction: column; flex: none; }
.nav h2 { margin-left: 10px; line-height: 30px; }
.navbody { flex: 1; overflow: hidden; position: relative; }
.nav li, .cat { width: calc(100% - 12px); }
.nav li { height: 28px; line-height: 30px; padding-left: 21px; }
.nav li.on { background: #deecfd; color: #0f7df2; }
.cat { display: flex; align-items: center; height: 42px; padding: 2px 6px 0 9px; background: #f0f1f5; border-bottom: 1px solid #fff; font-weight: bold; }
.cat > svg:first-child { width: 26px; height: 26px; margin-right: 14px; }
.cat .chev { width: 10px; height: 6px; margin-left: auto; }
.cat .up { transform: rotate(180deg); }
.cat.open { background: #d2d2d2; color: #4f7ade; }
.thumb { position: absolute; right: 3px; top: 155px; width: 4px; height: 363px; background: #ececec; border-radius: 2px; }

.mid { width: 373px; margin-left: 4px; display: flex; flex-direction: column; flex: none; }
.panel { border: 1px solid #d5d5d8; border-top: 0; height: 320px; flex: none; }
.panel.props { margin-top: 4px; height: auto; flex: 1; min-height: 0; }
.tab { padding: 2px 10px 0; }
.tab.on { background: #fff; color: #1a73e8; margin-left: 8px; }
.tools { display: flex; gap: 9px; padding: 7px 10px; }
.tools button { width: 32px; height: 26px; background: #f4f4f5; border-radius: 3px; display: grid; place-items: center; }
.tools svg { width: 16px; height: 16px; }
.split { display: flex; gap: 1px; }
.tools .more { width: 12px; }
.search { display: flex; align-items: center; height: 26px; margin: 0 10px 0 8px; padding: 1px 10px 0 12px; background: #f4f4f5; border-radius: 13px; }
.search input { flex: 1; outline: 0; }
.search input::placeholder { color: #777; opacity: 1; }
.search svg { width: 12px; height: 12px; }
.tree { padding-top: 10px; }
.tree div { display: flex; align-items: center; height: 24px; gap: 4px; }
.tree .l1 { padding-left: 5px; }
.tree .l2 { padding-left: 15px; gap: 0; }
.tree .l3 { padding-left: 40px; }
.sel { background: #c2d9f2; border-radius: 2px; width: 104px; padding: 2px 3px 3px; }

table { width: 100%; border-collapse: collapse; table-layout: fixed; margin-top: 1px; }
.c1 { width: 100px; }
.c2 { width: 229px; }
th { font-weight: normal; background: #ededee; height: 25px; padding-top: 2px; border-right: 1px solid #d0d0d0; border-bottom: 1px solid #d0d0d0; }
th:last-child { text-align: left; padding-left: 8px; border-right: 0; }
td { height: 25px; }
td label { padding-left: 15px; color: #1a56f0; }
td input[type="text"] { display: block; width: 228px; height: 21px; border: 1px solid #ddd; padding: 0 3px; margin-left: 1px; }
td input:disabled { color: #888; }
td input[type="checkbox"] { appearance: none; display: block; width: 14px; height: 14px; border: 1px solid #777; border-radius: 2px; margin-left: 14px; background: #fff; }
.sec td { background: #ececec; padding-left: 21px; }
.sec .dd { float: left; margin: 5px 0 0 -13px; }
.sec.line td { border-bottom: 1px solid #fff; }
.editbtn { align-self: flex-start; height: 24px; width: 80px; margin: 3px 0 3px 6px; border: 1px solid #c4c4c4; border-radius: 3px; padding-top: 1px; }

.view { flex: 1; min-width: 0; margin-left: 4px; overflow: hidden; }
.view svg { width: 100%; height: 100%; }
.num2 { font: 20px "Liberation Serif", serif; fill: #fff; text-anchor: middle; }
.axis { font: 15px "Liberation Sans", sans-serif; text-anchor: middle; }
.axis.sm { font-size: 10px; }

.dialog { position: absolute; left: 562px; top: 33px; width: 485px; background: #fff; border: 1px solid #b9bcc4; border-radius: 8px; overflow: hidden; box-shadow: 0 1px 3px #0005; }
.dtitle { display: flex; justify-content: space-between; align-items: center; height: 27px; padding: 0 11px 0 17px; }
.dtitle h1 { font-size: 14px; }
.dtitle svg { width: 13px; height: 13px; }
.dtabs { display: flex; align-items: flex-end; gap: 4px; height: 26px; border-bottom: 2px solid #c3cad2; }
.dtabs button { width: 60px; height: 21px; background: #dcdcdc; border-radius: 3px 3px 0 0; color: #444; }
.dtabs .on { width: 61px; height: 26px; background: #fff; color: #1a73e8; border: 1px solid #c3c7cf; border-bottom: 0; padding-top: 2px; }
.dtools { display: flex; align-items: center; height: 33px; padding: 1px 0 0 2px; border-bottom: 1px solid #ccc; }
.dtools button { height: 23px; white-space: nowrap; padding-top: 2px; }
.dtools button:disabled { color: #aaa; }
.dtools .on { background: #c2d9f2; border-radius: 3px; width: 35px; }
.dtools hr { width: 1px; height: 24px; border: 0; background: #ddd; margin: 0 7px; }
.dtools .wide { margin: 0 7px 0 12px; }
.dtools button + button { margin-left: 14px; }
.dtools label { display: flex; align-items: center; gap: 4px; color: #000; }
.r2 { margin: 0 0 0 23px; }
.dtools input { appearance: none; width: 14px; height: 14px; border: 1px solid #666; border-radius: 50%; background: #fff; }
.dtools input:checked { background: radial-gradient(#1a73e8 3px, #fff 4px); }
.dtools .line { display: flex; align-items: center; gap: 5px; padding: 1px 2px 0; border: 1px solid #f0f0f0; border-radius: 2px; }
.dtools .line + button { margin-left: 8px; }
.dtools .corner { margin-left: 5px; }
.dtools .next { margin-left: auto; width: 10px; background: #f1f1f1; display: grid; place-items: center; height: 26px; padding: 0; }
.next svg { width: 8px; height: 6px; }
.draw { background: #000; }
.info { display: flex; align-items: center; gap: 6px; height: 39px; padding: 6px 0 0 12px; color: #f0f0f0; }
.selwrap { position: relative; }
.info select { appearance: none; width: 135px; height: 26px; background: #fff; color: #222; border: 1px solid #ccc; border-radius: 3px; padding-left: 6px; display: block; }
.selwrap::after { top: 12px; }
.sec-svg { width: 100%; height: auto; }
.dim { font: 11px "DejaVu Sans Mono", monospace; fill: #3d4350; }
.lbl { font: 10px "DejaVu Sans Mono", monospace; }
.cn { font: 12px "Noto Sans CJK SC", sans-serif; }
.dstatus { display: flex; align-items: center; gap: 1px; height: 30px; padding: 1px 2px 0; background: #fcfcfc; }
.dstatus button, .fbtns button { width: 24px; height: 25px; border: 1px solid #8c8c8c; border-radius: 3px; background: #fff; display: flex; align-items: center; justify-content: center; gap: 6px; flex: none; }
.dstatus .on, .fbtns .on { background: #dbe8fb; border-color: #3a82e4; }
.fbtns .dim-btn { border-color: #bbb; }
.dstatus button svg, .fbtns svg { width: 16px; height: 16px; }
.dstatus p { white-space: nowrap; }
.resize { width: 9px; height: 9px; margin: 12px 2px 0 auto; }

.widget { position: absolute; left: 972px; top: 183px; width: 42px; height: 289px; background: #20222cf5; border-radius: 12px 12px 21px 21px; color: #eee; display: flex; flex-direction: column; align-items: center; }
.badge { width: 16px; height: 18px; margin-top: 9px; }
.one { font: bold 11px "Open Sans", sans-serif; fill: #fff; }
.gauge { position: relative; width: 42px; height: 42px; margin-top: 8px; }
.gauge svg { width: 42px; height: 42px; }
.gauge b { position: absolute; inset: 0; text-align: center; font-size: 16px; line-height: 44px; color: #fff; }
.gauge small { font-size: 8px; font-weight: normal; color: #aaa; }
.rate { display: flex; align-items: center; gap: 4px; height: 29px; padding-top: 6px; font-family: Roboto, sans-serif; }
.rate svg { width: 6px; height: 8px; }
.rate p { display: flex; flex-direction: column; font-size: 11px; line-height: 12px; color: #fff; }
.rate small { font-size: 9px; line-height: 10px; color: #aaa; }
.widget hr { width: 26px; border: 0; border-top: 1px solid #32454f; margin: 5px 0 6px; }
.widget button { font-size: 10px; line-height: 14px; color: #d8d8d8; margin-bottom: 7px; white-space: nowrap; }
.widget button svg { width: 20px; height: 20px; margin: 0 auto 3px; }

footer { display: flex; align-items: center; height: 29px; background: #fafafa; padding: 2px 0 0 2px; white-space: nowrap; flex: none; }
.f1 { width: 90px; } .f2 { width: 140px; } .f3 { width: 110px; } .f4 { width: 110px; }
.fbtns { display: flex; gap: 4px; }
.fbtns button { width: 25px; }
.fbtns .w { width: 35px; }
.hint { display: flex; align-items: center; gap: 3px; margin-left: 16px; }
.hint svg { width: 16px; height: 16px; }

.marks { position: absolute; left: 0; top: 0; pointer-events: none; }
```
